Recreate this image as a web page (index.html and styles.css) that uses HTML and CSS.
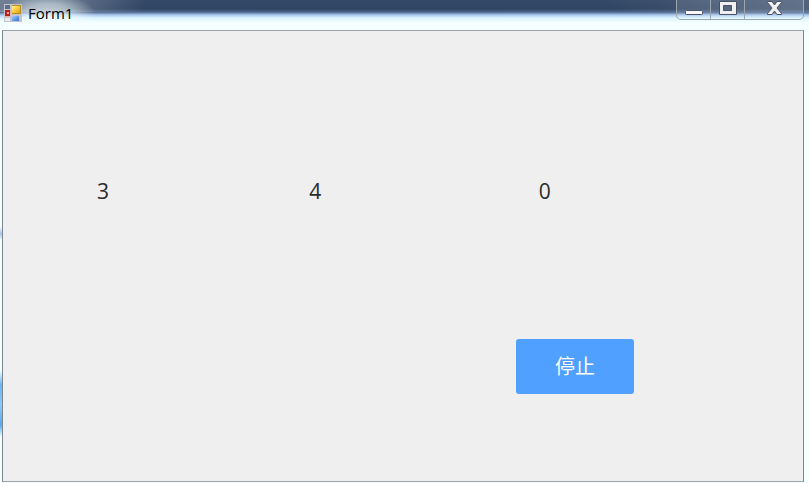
FILE: index.html
```html
<!DOCTYPE html>
<html lang="zh-CN">
<head>
    <meta charset="UTF-8">
    <meta name="viewport" content="width=device-width, initial-scale=1.0">
    <title>Form1</title>
    <link rel="stylesheet" href="styles.css">
</head>
<body>
    <div class="window">
        <header class="titlebar">
            <div class="title">
                <svg class="app-icon" width="18" height="18" viewBox="0 0 18 18" aria-hidden="true">
                    <defs>
                        <linearGradient id="gold" x1="0" y1="0" x2="1" y2="1">
                            <stop offset="0" stop-color="#fff3a0"/>
                            <stop offset="0.5" stop-color="#f7cc3c"/>
                            <stop offset="1" stop-color="#e0a010"/>
                        </linearGradient>
                        <linearGradient id="blue" x1="0" y1="0" x2="1" y2="1">
                            <stop offset="0" stop-color="#a4ccff"/>
                            <stop offset="1" stop-color="#2f6fd6"/>
                        </linearGradient>
                    </defs>
                    <rect width="18" height="18" fill="#c3c5ca"/>
                    <rect x="1" y="1" width="5" height="4" fill="#5a6f91"/>
                    <rect x="1" y="6" width="6" height="7" fill="#d9b5b5"/>
                    <rect x="1" y="6" width="5" height="6" fill="#b81f1f"/>
                    <rect x="3" y="8" width="2" height="2" fill="#f0a090"/>
                    <rect x="8" y="1" width="9" height="9" fill="#b98a1c"/>
                    <rect x="8" y="2" width="8" height="7" fill="url(#gold)"/>
                    <rect x="1" y="14" width="5" height="3" fill="#e9ebee"/>
                    <rect x="8" y="12" width="7" height="5" fill="url(#blue)"/>
                </svg>
                <span>Form1</span>
            </div>
            <div class="controls">
                <button class="control" type="button" aria-label="Minimize">
                    <svg width="18" height="18" viewBox="0 0 18 18">
                        <rect x=".5" y="10.500" width="17" height="4" rx="1" fill="#f8f8f8" stroke="#4c4f60"/>
                    </svg>
                </button>
                <button class="control" type="button" aria-label="Maximize">
                    <svg width="18" height="18" viewBox="0 0 18 18">
                        <path d="M.5 1.500h17v13h-17zM4.500 5.500v5h8v-5z" fill="#f0f0f2" fill-rule="evenodd" stroke="#4c4f60"/>
                    </svg>
                </button>
                <button class="control close" type="button" aria-label="Close">
                    <svg width="18" height="18" viewBox="0 0 18 18">
                        <path d="M2.500 1.500h4.500l2.500 3.500 2.500-3.500h4.500v1l-4.500 5.500 4.500 5.500v1h-4.500l-2.500-3.500-2.500 3.500h-4.500v-1l4.500-5.500-4.500-5.500z" fill="#f0f0f2" stroke="#4c4f60"/>
                    </svg>
                </button>
            </div>
        </header>
        <main class="form">
            <div class="numbers">
                <span>3</span>
                <span>4</span>
                <span>0</span>
            </div>
            <div class="actions">
                <button class="stop" type="button">停止</button>
            </div>
        </main>
    </div>
</body>
</html>
```
FILE: styles.css
```css
* {
    box-sizing: border-box;
}
body {
    margin: 0;
    font-family: "Segoe UI", "Open Sans", "Noto Sans CJK SC", sans-serif;
}
button {
    font-family: inherit;
    border: none;
    padding: 0;
}
.window {
    display: flex;
    flex-direction: column;
    height: 100vh;
    padding: 0 5px 1px 2px;
    /* aero glass: blue spots showing through the left edge, dark strip on top */
    background:
        linear-gradient(transparent 370px, #69b5f6 385px, #8ccafa 405px, #58a8f4 425px, transparent 437px) 0 0 / 2px 100% no-repeat,
        linear-gradient(transparent 226px, #a9c6ee 234px, transparent 240px) 0 0 / 2px 100% no-repeat,
        radial-gradient(ellipse 48px 22px at 48px 15px, rgba(245, 255, 255, 0.7), rgba(245, 255, 255, 0.5) 50%, rgba(245, 255, 255, 0)) no-repeat,
        linear-gradient(90deg, rgba(255, 255, 255, 0.3), rgba(255, 255, 255, 0.2) 10%, rgba(255, 255, 255, 0) 18%, rgba(255, 255, 255, 0) 75%, rgba(255, 255, 255, 0.15)) 0 0 / 100% 12px no-repeat,
        linear-gradient(#344a69, #304563 9px, #4c658b 12px, #abc9ef 15px, #dcf4ff 18px, #f5ffff 23px);
}
.titlebar {
    display: flex;
    justify-content: space-between;
    align-items: flex-start;
    height: 30px;
    flex-shrink: 0;
}
.title {
    display: flex;
    align-items: center;
    gap: 6px;
    padding: 3px 0 0 2px;
    font-size: 15px;
    line-height: 20px;
    color: #000;
}
.controls {
    display: flex;
    height: 20px;
    border: 1px solid #9da5af;
    border-top: none;
    border-radius: 0 0 5px 5px;
}
.control {
    display: flex;
    justify-content: center;
    width: 34px;
    background: rgba(255, 255, 255, 0.1);
    border-right: 1px solid #9da5af;
}
.control svg {
    flex-shrink: 0;
}
.close {
    width: 58px;
    border-right: none;
}
.form {
    display: flex;
    flex-direction: column;
    flex: 1;
    background: #efefef;
    border: 1px solid #7d8688;
    border-top-color: #9aa6a8;
    border-bottom-color: #9aa6a8;
}
.numbers {
    display: grid;
    grid-template-columns: 212fr 229fr 264fr;
    padding: 18% 0 0 94px;
    font-size: 21px;
    line-height: 32px;
    color: #2b2b2b;
}
.actions {
    display: flex;
    justify-content: flex-end;
    padding: 132px 169px 0 0;
}
.stop {
    width: 118px;
    height: 55px;
    background: #50a0ff;
    border-radius: 3px;
    color: #fff;
    font-size: 20px;
    line-height: 28px;
}
```
